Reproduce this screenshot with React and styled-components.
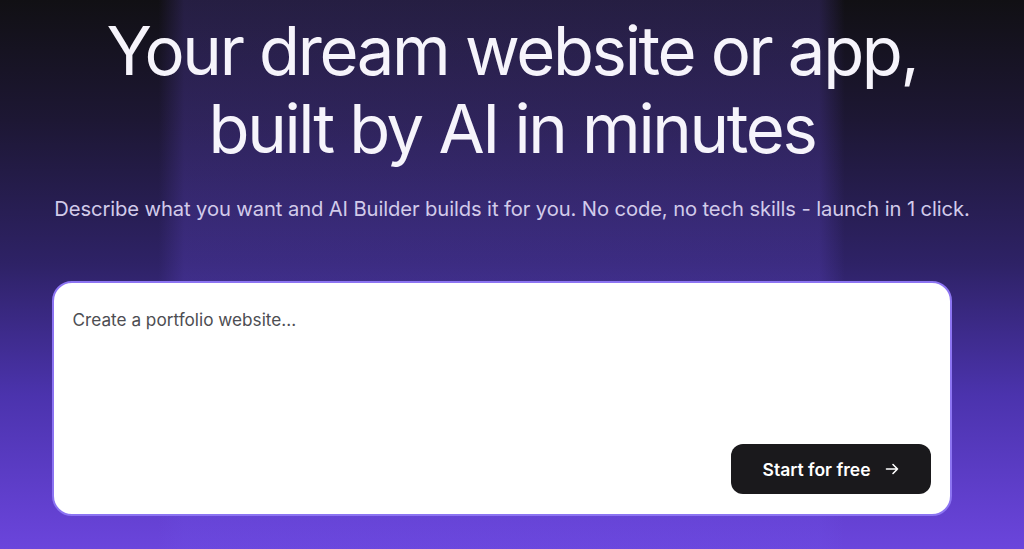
import React from 'react';
import styled, { createGlobalStyle } from 'styled-components';

const GlobalStyle = createGlobalStyle`
    html, body {
        margin: 0;
        padding: 0;
    }
    body {
        font-family: Inter, 'Noto Sans', sans-serif;
        background: #121016;
    }
`;

const Hero = styled.section`
    position: relative;
    height: 549px;
    overflow: hidden;
    display: flex;
    flex-direction: column;
    align-items: center;
    background:
        linear-gradient(
            90deg,
            rgba(0, 0, 0, 0) 0%,
            rgba(0, 0, 0, 0) 15.5%,
            rgba(110, 80, 230, 0.22) 18%,
            rgba(110, 80, 230, 0.22) 80%,
            rgba(0, 0, 0, 0) 82.5%,
            rgba(0, 0, 0, 0) 100%
        ),
        linear-gradient(180deg, #111014 0%, #1d1734 22%, #2e2266 48%, #4b33ad 72%, #6b45dc 100%);
`;

const Title = styled.h1`
    margin: 12px 0 0;
    font-size: 67px;
    line-height: 78px;
    font-weight: 400;
    letter-spacing: -0.035em;
    color: #f6f4fb;
    text-align: center;
`;

const Subtitle = styled.p`
    margin: 27px 0 0;
    font-size: 20.2px;
    line-height: 28px;
    color: #d2cbea;
    letter-spacing: -0.005em;
    text-align: center;
    white-space: nowrap;
`;

const Card = styled.div`
    margin: 58px 21px 0 0;
    width: 900px;
    height: 235px;
    box-sizing: border-box;
    background: #ffffff;
    border: 2px solid #8c74f2;
    border-radius: 20px;
    padding: 25px 19px 20px 19px;
    display: flex;
    flex-direction: column;
`;

const Prompt = styled.textarea`
    flex: 1;
    border: none;
    outline: none;
    resize: none;
    padding: 0;
    margin: 0;
    font-family: Inter, 'Noto Sans', sans-serif;
    font-size: 17.2px;
    line-height: 24px;
    color: #222;
    caret-color: #111;
    background: transparent;

    &::placeholder {
        color: #4d4d52;
    }
`;

const Actions = styled.div`
    display: flex;
    justify-content: flex-end;
`;

const StartButton = styled.button`
    width: 200px;
    height: 50px;
    border: none;
    border-radius: 12px;
    background: #1a191c;
    color: #ffffff;
    font-family: Inter, 'Noto Sans', sans-serif;
    font-size: 17.5px;
    font-weight: 600;
    display: flex;
    align-items: center;
    justify-content: center;
    gap: 14px;
    cursor: pointer;
`;

const Arrow = () => (
    <svg width="14" height="14" viewBox="0 0 14 14" fill="none" stroke="#fff" strokeWidth="1.6" strokeLinecap="round" strokeLinejoin="round">
        <path d="M1.5 7h11M8 2.5 12.5 7 8 11.5" />
    </svg>
);

export default function App() {
    return (
        <>
            <GlobalStyle />
            <Hero>
                <Title>
                    Your dream website or app,
                    <br />
                    built by AI in minutes
                </Title>
                <Subtitle>
                    Describe what you want and AI Builder builds it for you. No code, no tech skills - launch in 1 click.
                </Subtitle>
                <Card>
                    <Prompt placeholder="Create a portfolio website..." autoFocus />
                    <Actions>
                        <StartButton>
                            Start for free
                            <Arrow />
                        </StartButton>
                    </Actions>
                </Card>
            </Hero>
        </>
    );
}
